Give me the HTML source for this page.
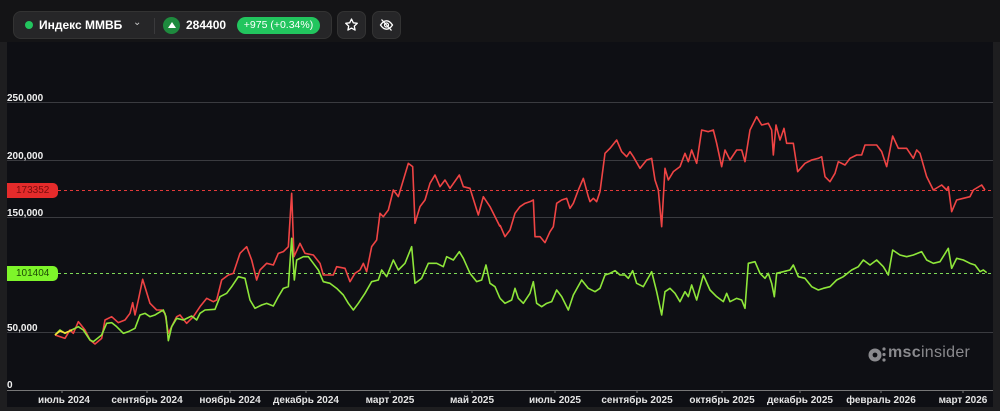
<!DOCTYPE html>
<html><head><meta charset="utf-8"><style>
body{margin:0;width:1000px;height:411px;background:#1e1e20;font-family:"Liberation Sans",sans-serif;position:relative;overflow:hidden;color:#fff}
.top{position:absolute;left:0;top:0;width:1000px;height:42px;background:#141416}
.pill{position:absolute;left:13px;top:11px;width:319px;height:28px;background:#262628;border:1px solid #333;border-radius:8px;box-sizing:border-box}
.btn{position:absolute;top:11px;width:29px;height:28px;background:#262628;border:1px solid #333;border-radius:7px;box-sizing:border-box}
.panel{position:absolute;left:7px;top:42px;width:986px;height:365px;background:#0e0f14}
.lab{position:absolute;font-size:10px;color:#f0f0f0;font-weight:bold}
.xl{position:absolute;top:395px;font-size:10px;color:#e4e4e4;transform:translateX(-50%);white-space:nowrap;font-weight:bold}
</style></head><body>
<div class="top"></div>
<div class="pill">
 <div style="position:absolute;left:11px;top:9px;width:8px;height:8px;border-radius:50%;background:#22c55e"></div>
 <div style="position:absolute;left:25px;top:6px;font-size:12px;font-weight:bold;font-family:'Liberation Sans','Noto Sans CJK SC',sans-serif">Индекс ММВБ</div>
 <div style="position:absolute;left:119px;top:5px;font-size:10px;color:#ccc">⌄</div>
 <div style="position:absolute;left:140px;top:6px;width:1px;height:16px;background:#3a3a3c"></div>
 <div style="position:absolute;left:149px;top:5px;width:17px;height:17px;border-radius:50%;background:#1e8a3e"></div>
 <div style="position:absolute;left:154px;top:10px;width:0;height:0;border-left:4px solid transparent;border-right:4px solid transparent;border-bottom:6px solid #fff"></div>
 <div style="position:absolute;left:172px;top:6px;font-size:12px;font-weight:bold">284400</div>
 <div style="position:absolute;left:223px;top:5px;width:83px;height:17px;border-radius:9px;background:#22c55e;font-size:10.5px;line-height:17px;text-align:center">+975 (+0.34%)</div>
</div>
<div class="btn" style="left:337px"><svg width="27" height="26" viewBox="0 0 27 26"><path d="M13.5 7l1.8 3.8 4 .5-3 2.8.8 4-3.6-2-3.6 2 .8-4-3-2.8 4-.5z" fill="none" stroke="#fff" stroke-width="1.3" stroke-linejoin="round"/></svg></div>
<div class="btn" style="left:372px"><svg width="27" height="26" viewBox="0 0 27 26"><path d="M7.5 13c2-3 4-4.2 6-4.2s4 1.2 6 4.2c-2 3-4 4.2-6 4.2s-4-1.2-6-4.2z" fill="none" stroke="#fff" stroke-width="1.3"/><circle cx="13.5" cy="13" r="2" fill="none" stroke="#fff" stroke-width="1.2"/><path d="M8.5 7.5l10 11" stroke="#fff" stroke-width="1.3"/></svg></div>
<div class="panel"></div>
<svg style="position:absolute;left:0;top:0" width="1000" height="411">
 <g stroke="#3a3b40" stroke-width="1">
  <line x1="7" y1="102.5" x2="993" y2="102.5"/><line x1="7" y1="160.5" x2="993" y2="160.5"/><line x1="7" y1="217.5" x2="993" y2="217.5"/><line x1="7" y1="332.5" x2="993" y2="332.5"/>
 </g>
 <line x1="7" y1="390.5" x2="993" y2="390.5" stroke="#777" stroke-width="1"/>
 <g stroke="#777">
  <line x1="62" y1="390" x2="62" y2="393"/><line x1="147" y1="390" x2="147" y2="393"/><line x1="230" y1="390" x2="230" y2="393"/><line x1="306" y1="390" x2="306" y2="393"/><line x1="390" y1="390" x2="390" y2="393"/><line x1="472" y1="390" x2="472" y2="393"/><line x1="555" y1="390" x2="555" y2="393"/><line x1="637" y1="390" x2="637" y2="393"/><line x1="722" y1="390" x2="722" y2="393"/><line x1="800" y1="390" x2="800" y2="393"/><line x1="881" y1="390" x2="881" y2="393"/><line x1="963" y1="390" x2="963" y2="393"/>
 </g>
 <line x1="58" y1="190.5" x2="993" y2="190.5" stroke="#e23a3a" stroke-dasharray="3 3"/>
 <line x1="58" y1="273.5" x2="993" y2="273.5" stroke="#7ed957" stroke-dasharray="3 3"/>
 <g fill="none" stroke-linejoin="round">
 <polyline transform="translate(40,100) scale(0.33333)" stroke="#ef4444" stroke-width="4.8" points="45,705 75,715 90,690 100,700 115,665 135,690 150,720 165,732 185,715 195,660 215,650 235,668 255,660 270,640 278,608 285,645 295,600 308,538 330,610 350,630 365,630 375,640 385,700 395,680 410,650 420,645 440,670 460,650 480,620 500,595 520,605 530,600 545,540 565,525 580,520 600,460 620,440 635,480 650,540 660,510 680,490 700,495 715,460 730,455 745,440 755,280 762,470 780,430 795,460 820,465 840,490 850,525 880,525 890,500 915,505 930,545 945,520 960,510 970,490 980,515 995,440 1010,420 1020,340 1030,350 1045,330 1060,270 1075,290 1090,240 1105,190 1118,200 1125,370 1140,320 1155,300 1170,250 1185,225 1200,260 1215,240 1230,265 1258,225 1270,260 1290,265 1315,345 1330,290 1350,320 1380,380"/>
 <polyline transform="translate(500,100) scale(0.33333)" stroke="#ef4444" stroke-width="4.8" points="0,375 15,410 30,390 45,340 60,320 75,310 90,305 100,300 105,410 120,410 135,428 150,395 160,380 170,310 185,300 200,295 210,325 220,310 235,270 250,235 265,290 270,305 280,295 290,305 300,275 315,160 330,145 350,120 365,155 380,170 390,155 400,170 420,205 440,180 455,175 465,240 475,270 485,380 495,205 505,240 520,215 540,200 555,160 565,185 575,150 590,190 605,90 625,95 640,90 650,130 665,200 675,150 690,180 710,150 725,150 735,185 750,90 770,50 785,75 805,70 815,90 820,165 828,75 840,120 852,85 860,130 880,130 893,215 915,190 935,180 955,175 965,170 975,230 990,245 1005,220 1015,185 1035,195 1050,175 1070,165 1085,165 1095,135 1130,135 1145,155 1160,200 1178,108 1195,145 1220,145 1240,175 1250,150 1260,160 1280,230 1300,270 1325,255 1340,270 1345,260 1355,335 1370,300 1390,295 1410,290 1420,270 1445,255 1455,270"/>
 <polyline transform="translate(40,100) scale(0.33333)" stroke="#8ee63a" stroke-width="4.8" points="45,705 60,690 75,700 95,690 115,680 130,690 150,720 160,725 185,705 200,670 215,668 230,680 250,700 265,695 285,685 300,645 315,640 330,650 345,645 370,630 378,650 385,722 395,680 410,655 430,660 455,648 470,660 480,640 495,630 525,628 540,590 560,580 575,560 595,530 615,535 630,600 645,625 665,615 680,610 700,618 715,590 730,565 745,560 755,415 763,540 770,480 790,470 805,470 820,490 835,510 850,545 870,550 890,565 910,585 925,610 940,630 955,610 975,580 995,545 1015,540 1025,510 1040,530 1060,480 1075,510 1095,490 1115,440 1125,550 1145,535 1165,490 1190,490 1210,500 1220,470 1240,480 1258,455 1270,475 1290,520 1310,545 1325,540 1338,495 1350,550 1365,560 1380,595"/>
 <polyline transform="translate(500,100) scale(0.33333)" stroke="#8ee63a" stroke-width="4.8" points="0,595 15,610 35,600 45,565 55,595 70,610 90,580 100,545 110,610 125,620 140,610 155,605 170,570 185,590 205,630 220,585 245,540 265,565 285,575 300,565 315,525 330,520 345,512 360,525 375,525 385,535 398,512 410,550 430,560 455,515 470,575 485,645 495,575 510,565 525,580 540,605 555,575 565,590 575,555 590,600 610,525 630,570 650,590 670,605 680,580 690,605 710,595 725,600 735,625 745,490 765,485 780,520 795,535 805,520 815,550 823,590 830,520 850,515 870,510 880,495 895,530 915,535 935,560 955,570 970,565 990,560 1010,540 1030,530 1055,510 1075,500 1090,480 1110,495 1130,480 1150,500 1165,525 1178,450 1200,465 1220,470 1240,465 1265,455 1280,480 1300,490 1320,485 1345,445 1355,505 1370,475 1390,480 1410,490 1425,495 1440,515 1450,510 1460,518"/>
 <polyline stroke="#f5e03a" stroke-width="1.6" points="55,335 60,331 65,333 72,330"/>
 </g>
 <g fill="#8a8a8e">
  <circle cx="875" cy="355" r="6.5"/><circle cx="884" cy="349" r="1.6"/><circle cx="884" cy="354.5" r="1.6"/><circle cx="884" cy="360" r="1.6"/>
 </g>
 <circle cx="875" cy="355" r="2.4" fill="#0e0f14"/>
</svg>
<div style="position:absolute;left:888px;top:344px;font-size:16px;color:#8a8a8e;letter-spacing:0.3px"><b>msc</b>insider</div>
<div class="lab" style="left:7px;top:93px">250,000</div>
<div class="lab" style="left:7px;top:151px">200,000</div>
<div class="lab" style="left:7px;top:208px">150,000</div>
<div class="lab" style="left:7px;top:323px">50,000</div>
<div class="lab" style="left:7px;top:380px">0</div>
<div style="position:absolute;left:7px;top:183px;width:51px;height:15px;background:#e52b2b;border-radius:0 5px 5px 0;font-size:10px;line-height:15px;color:#7a0d0d;padding-left:9px;box-sizing:border-box">173352</div>
<div style="position:absolute;left:7px;top:266px;width:51px;height:15px;background:#7ef52a;border-radius:0 5px 5px 0;font-size:10px;line-height:15px;color:#1d4a05;padding-left:9px;box-sizing:border-box">101404</div>
<div style="font-family:'Liberation Sans','Noto Sans CJK SC',sans-serif">
<div class="xl" style="left:64px">июль 2024</div>
<div class="xl" style="left:147px">сентябрь 2024</div>
<div class="xl" style="left:230px">ноябрь 2024</div>
<div class="xl" style="left:306px">декабрь 2024</div>
<div class="xl" style="left:390px">март 2025</div>
<div class="xl" style="left:472px">май 2025</div>
<div class="xl" style="left:555px">июль 2025</div>
<div class="xl" style="left:637px">сентябрь 2025</div>
<div class="xl" style="left:722px">октябрь 2025</div>
<div class="xl" style="left:800px">декабрь 2025</div>
<div class="xl" style="left:881px">февраль 2026</div>
<div class="xl" style="left:963px">март 2026</div>
</div>
</body></html>
